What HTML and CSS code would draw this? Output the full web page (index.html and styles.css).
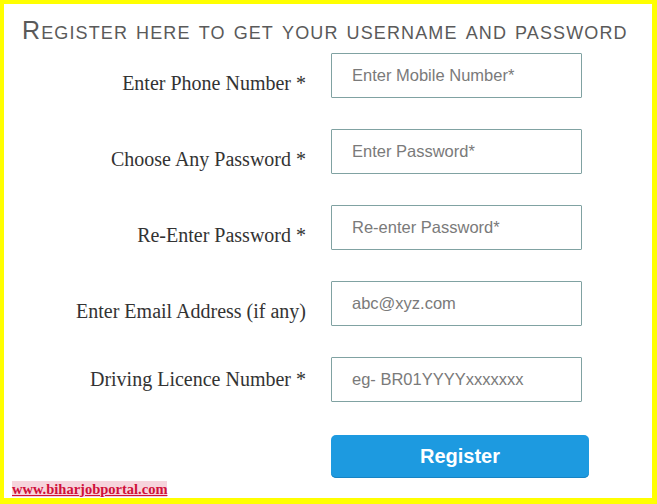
FILE: index.html
```html
<!DOCTYPE html>
<html>
<head>
<meta charset="utf-8">
<link rel="stylesheet" href="styles.css">
</head>
<body>
<div class="frame">
  <h1 class="title">Register here to get your username and password</h1>
  <form class="form">
    <label class="label">Enter Phone Number *</label>
    <input class="field" type="text" placeholder="Enter Mobile Number*">
    <label class="label">Choose Any Password *</label>
    <input class="field" type="text" placeholder="Enter Password*">
    <label class="label">Re-Enter Password *</label>
    <input class="field" type="text" placeholder="Re-enter Password*">
    <label class="label">Enter Email Address (if any)</label>
    <input class="field" type="text" placeholder="abc@xyz.com">
    <label class="label label-center">Driving Licence Number *</label>
    <input class="field" type="text" placeholder="eg- BR01YYYYxxxxxxx">
    <span></span>
    <button class="btn" type="button">Register</button>
  </form>
  <div class="mark"><span class="mark-text">www.biharjobportal.com</span></div>
</div>
</body>
</html>
```
FILE: styles.css
```css
html, body {
  margin: 0;
  padding: 0;
  background: #ffffff;
}
.frame {
  box-sizing: border-box;
  width: 657px;
  height: 504px;
  border-style: solid;
  border-color: #ffff00;
  border-width: 4px 5px 6px 4px;
  background: #ffffff;
  display: flex;
  flex-direction: column;
}
.title {
  margin: 12px 0 0 18px;
  font-family: "Liberation Sans", Arial, sans-serif;
  font-weight: normal;
  font-variant: small-caps;
  font-size: 25px;
  line-height: 28px;
  letter-spacing: 1.12px;
  color: #5a5a5a;
  white-space: nowrap;
}
.form {
  display: grid;
  grid-template-columns: 302px 251px;
  column-gap: 25px;
  row-gap: 31px;
  margin-top: 9px;
}
.label {
  text-align: right;
  font-family: "Liberation Serif", "Times New Roman", serif;
  font-size: 20px;
  line-height: 22px;
  color: #333333;
  margin-top: 19px;
}
.label-center {
  margin-top: 11px;
}
.field {
  box-sizing: border-box;
  width: 251px;
  height: 45px;
  margin: 0;
  border: 1px solid #80a2a2;
  border-radius: 1px;
  padding: 0 0 0 20px;
  font-family: "Liberation Sans", Arial, sans-serif;
  font-size: 16.5px;
  color: #777777;
  background: #ffffff;
  outline: none;
}
.field::placeholder {
  color: #7a7a7a;
  opacity: 1;
}
.btn {
  box-sizing: border-box;
  width: 258px;
  height: 43px;
  margin-top: 2px;
  border: none;
  border-radius: 5px;
  background: #1d9ae0;
  color: #ffffff;
  font-family: "Liberation Sans", Arial, sans-serif;
  font-weight: bold;
  font-size: 20px;
  padding: 0;
  box-shadow: inset 0 -1px 0 #1784c4;
}
.mark {
  margin: 2px 0 0 8px;
}
.mark-text {
  font-family: "Liberation Serif", "Times New Roman", serif;
  font-weight: bold;
  font-size: 14.5px;
  line-height: 15px;
  color: #d0103a;
  text-decoration: underline;
  background: #f6d4dc;
}
```
